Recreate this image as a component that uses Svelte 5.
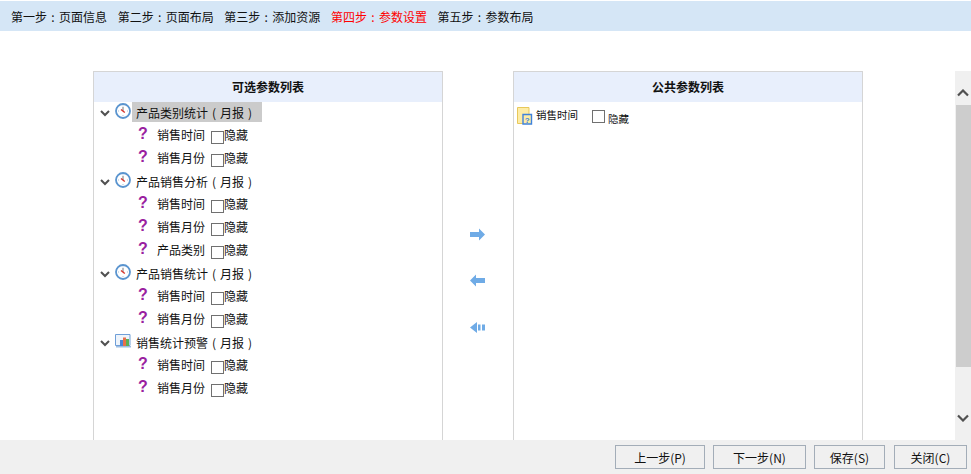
<script>
  // the reference font centres its full-width colon and brackets, so they get a cell of their own
  function split(text) {
    return text.split(/([:()])/).filter(Boolean);
  }

  const steps = [
    { label: '第一步:页面信息' },
    { label: '第二步:页面布局' },
    { label: '第三步:添加资源' },
    { label: '第四步:参数设置', active: true },
    { label: '第五步:参数布局' }
  ];

  const tree = [
    { name: '产品类别统计(月报)', icon: 'clock', selected: true, params: ['销售时间', '销售月份'] },
    { name: '产品销售分析(月报)', icon: 'clock', params: ['销售时间', '销售月份', '产品类别'] },
    { name: '产品销售统计(月报)', icon: 'clock', params: ['销售时间', '销售月份'] },
    { name: '销售统计预警(月报)', icon: 'chart', params: ['销售时间', '销售月份'] }
  ];

  const buttons = [
    { label: '上一步(P)', width: 90 },
    { label: '下一步(N)', width: 93 },
    { label: '保存(S)', width: 71 },
    { label: '关闭(C)', width: 73 }
  ];
</script>

{#snippet wide(text)}
  {#each split(text) as part}
    {#if ':()'.includes(part)}<span class="cell">{part}</span>{:else}{part}{/if}
  {/each}
{/snippet}

<div class="page">
  <nav class="steps">
    {#each steps as step}
      <span class:active={step.active}>{@render wide(step.label)}</span>
    {/each}
  </nav>

  <div class="main">
    <section class="panel">
      <h2>可选参数列表</h2>
      <div class="tree">
        {#each tree as node}
          <div class="row">
            <svg class="caret" width="10" height="7" viewBox="0 0 10 7"><path d="M1 1l4 4 4-4" fill="none" stroke="#505050" stroke-width="2" /></svg>
            {#if node.icon === 'clock'}
              <svg class="node-icon" width="16" height="16" viewBox="0 0 16 16">
                <circle cx="8" cy="8" r="7" fill="#fff" stroke="#5a94cf" stroke-width="1.800" />
                <path d="M8 8L8 4" stroke="#777" stroke-width="1" />
                <path d="M6 6.500l3.800 3" stroke="#d8322a" stroke-width="1.400" />
                <path d="M8 2.500v1M13 8h-1M3 8h1M8 13v-1" stroke="#a9bfd6" stroke-width="1" />
              </svg>
            {:else}
              <svg class="node-icon" width="16" height="14" viewBox="0 0 16 14">
                <path d="M.5.500h14.500v11H.5z" fill="#eef4fb" stroke="#6f9fd8" />
                <rect x="5" y="6" width="3" height="6" fill="#4a86d8" />
                <rect x="8" y="3.500" width="3" height="8.500" fill="#e8704a" />
                <rect x="11" y="5" width="3" height="7" fill="#5bb054" />
                <rect x="1" y="12" width="15" height="1.500" fill="#9dbde2" />
              </svg>
            {/if}
            <span class="node-name" class:selected={node.selected}>{@render wide(node.name)}</span>
          </div>
          {#each node.params as param}
            <div class="row param">
              <span class="mark">?</span>
              <span class="param-name">{param}</span>
              <span class="box"></span>
              <span class="hide">隐藏</span>
            </div>
          {/each}
        {/each}
      </div>
    </section>

    <div class="arrows">
      <svg width="16" height="14" viewBox="0 0 16 14"><path d="M0 4h9V0.500l6 6-6 6V9H0z" fill="#6fabe6" /></svg>
      <svg width="16" height="14" viewBox="0 0 16 14"><path d="M15 4H6V0.500l-6 6 6 6V9h9z" fill="#6fabe6" /></svg>
      <svg width="16" height="14" viewBox="0 0 16 14"><path d="M7 1v11L0 6.500zM8 3.500h2.500v6H8zM12 3.500h3v6h-3z" fill="#6fabe6" /></svg>
    </div>

    <section class="panel">
      <h2>公共参数列表</h2>
      <div class="public-row">
        <svg width="16" height="18" viewBox="0 0 16 18">
          <path d="M.5.500h11.500v16H.5z" fill="#fdeca6" stroke="#e8c85a" />
          <path d="M6 7.500h8.500v9.500H6z" fill="#fdeca6" stroke="#3f82dc" stroke-width="1.400" />
          <text x="10.200" y="15.500" class="file-mark">?</text>
        </svg>
        <span class="public-name">销售时间</span>
        <span class="box"></span>
        <span class="public-hide">隐藏</span>
      </div>
    </section>

    <div class="scrollbar">
      <svg class="up" width="12" height="8" viewBox="0 0 12 8"><path d="M1 6.500l5-5 5 5" fill="none" stroke="#505050" stroke-width="2.200" /></svg>
      <div class="thumb"></div>
      <svg class="down" width="12" height="8" viewBox="0 0 12 8"><path d="M1 1.500l5 5 5-5" fill="none" stroke="#505050" stroke-width="2.200" /></svg>
    </div>
  </div>

  <footer>
    {#each buttons as btn}
      <button style="width: {btn.width}px">{btn.label}</button>
    {/each}
  </footer>
</div>

<style>
  :global(body) {
    margin: 0;
    background: #fff;
  }

  .page {
    height: 474px;
    display: flex;
    flex-direction: column;
    font: 12px "Noto Sans CJK SC", "Liberation Sans", sans-serif;
    color: #111;
    overflow: hidden;
  }

  .cell {
    display: inline-block;
    width: 12px;
    text-align: center;
  }

  .steps {
    height: 30px;
    margin-top: 1px;
    padding-left: 11px;
    display: flex;
    align-items: center;
    gap: 10.600px;
    background: #d5e6f6;
    flex: none;
  }

  .steps .active {
    color: #f00;
  }

  .main {
    flex: 1;
    min-height: 0;
    display: flex;
    padding: 40px 0 0 93px;
  }

  .panel {
    width: 350px;
    box-sizing: border-box;
    border: 1px solid #d5d5d5;
    border-bottom: 0;
    flex: none;
  }

  h2 {
    margin: 0;
    height: 30px;
    line-height: 30px;
    background: #e8effc;
    text-align: center;
    font-size: 12px;
    font-weight: 700;
    color: #111;
  }

  .row {
    height: 23px;
    display: flex;
    align-items: center;
    padding-left: 6px;
  }

  .tree {
    margin-top: -1px;
  }

  .caret {
    margin-right: 5px;
    margin-top: 1px;
  }

  .node-icon {
    margin-right: 1px;
    margin-top: -4px;
  }

  .node-name {
    height: 20px;
    line-height: 21px;
    padding: 0 6px 0 4px;
    margin-top: -1px;
  }

  .node-name.selected {
    background: #cbcbcb;
  }

  .param {
    padding-left: 44px;
  }

  .mark {
    width: 19px;
    margin-top: -4px;
    font: 700 16px "Liberation Sans", sans-serif;
    color: #9a1fa0;
  }

  .param-name {
    margin-right: 6px;
    margin-top: -3px;
  }

  .box {
    width: 11px;
    height: 11px;
    border: 1px solid #707070;
    background: #fff;
    flex: none;
  }

  .param .box {
    margin-top: 3px;
  }

  .hide {
    margin-top: -2px;
  }

  .arrows {
    width: 70px;
    flex: none;
    display: flex;
    flex-direction: column;
    align-items: center;
    gap: 32.300px;
    padding-top: 157px;
  }

  .public-row {
    display: flex;
    align-items: flex-start;
    padding: 5px 0 0 3px;
    font-size: 10.500px;
  }

  .file-mark {
    font: 700 8px "Liberation Sans", sans-serif;
    fill: #3f82dc;
    text-anchor: middle;
  }

  .public-name {
    margin: 0 14px 0 3px;
  }

  .public-row .box {
    margin-top: 3px;
  }

  .public-hide {
    margin: 4px 0 0 3px;
  }

  .scrollbar {
    width: 16px;
    margin-left: auto;
    background: #f0f0f0;
    display: flex;
    flex-direction: column;
    align-items: center;
    padding-top: 17px;
    flex: none;
  }

  .up {
    margin-top: 1px;
  }

  .thumb {
    align-self: stretch;
    margin: 8px 0 0 1px;
    height: 262px;
    background: #cdcdcd;
  }

  .down {
    margin-top: auto;
    margin-bottom: 18px;
  }

  footer {
    height: 34px;
    flex: none;
    background: #f0f0f0;
    display: flex;
    justify-content: flex-end;
    gap: 8px;
    padding: 5px 4px 0 0;
    box-sizing: border-box;
  }

  button {
    height: 24px;
    padding: 0;
    box-sizing: border-box;
    border: 1px solid #a3adb8;
    background: #f0f0f0;
    font: inherit;
    color: #111;
  }

  button:last-child {
    margin-left: 1px;
  }
</style>
